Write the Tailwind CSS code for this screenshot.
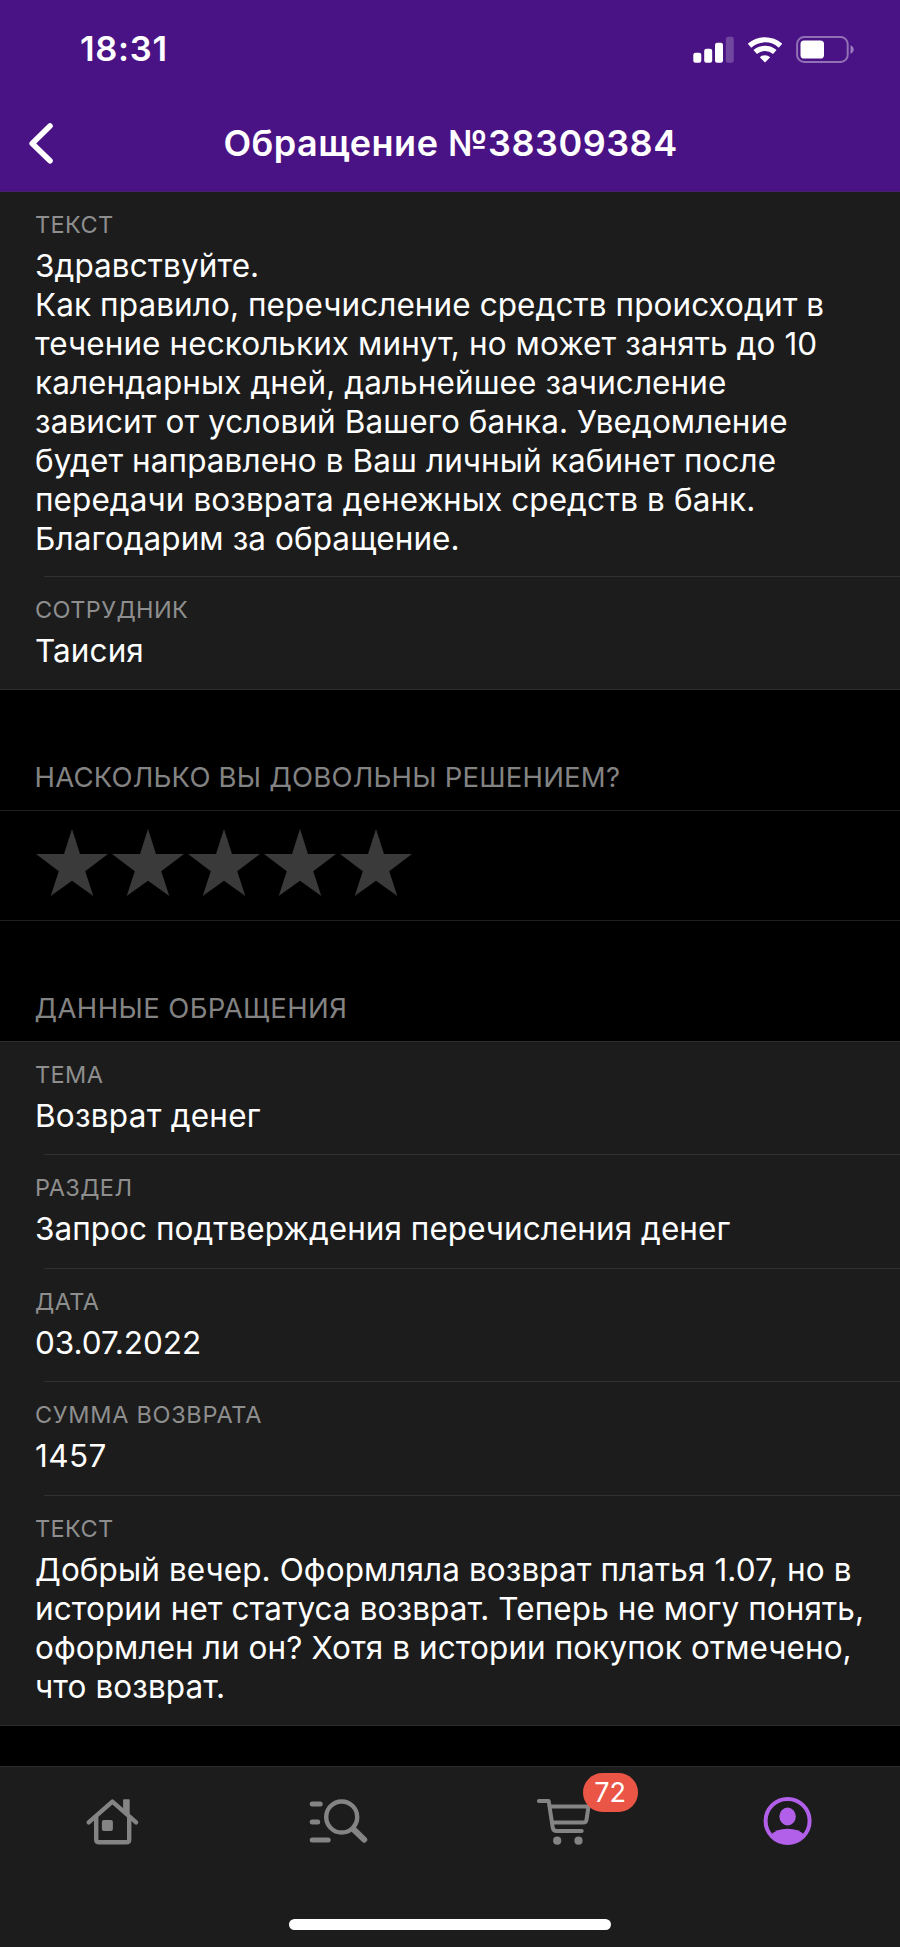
<!DOCTYPE html>
<html lang="ru">
<head>
  <meta charset="UTF-8" />
  <meta name="viewport" content="width=device-width, initial-scale=1.0"/>
  <title>Обращение №38309384</title>
  <script src="https://cdn.jsdelivr.net/npm/@tailwindcss/browser@4"></script>
</head>
<body class="bg-black text-white font-['Inter','Liberation_Sans',sans-serif]">

  <div class="w-[900px] h-[1947px] flex flex-col overflow-hidden">

    <!-- Header -->
    <header class="h-48 shrink-0 bg-[#491285] border-b border-[#43226b]">
      <div class="h-[98px] flex items-center justify-between pl-20 pr-[46px]">
        <span class="text-[34.5px] leading-10 font-semibold tracking-[0.7px]">18:31</span>
        <div class="flex items-center">
          <svg class="w-[41px] h-[27px]" viewBox="0 0 41 27" fill="#fff">
            <rect x="0.3" y="16.7" width="8" height="10" rx="2.2" />
            <rect x="11.2" y="12.7" width="8" height="14" rx="2.2" />
            <rect x="22" y="6.7" width="8" height="20" rx="2.2" />
            <rect x="32.8" y="0.7" width="8" height="26" rx="2.2" opacity="0.22" />
          </svg>
          <svg class="w-[34px] h-[27px] ml-[14px]" viewBox="0 0 34 27" fill="none" stroke="#fff" stroke-width="5.2">
            <path d="M1.5 9.7a23.2 23.2 0 0 1 31 0" />
            <path d="M7.2 16a14.8 14.8 0 0 1 19.6 0" />
            <path d="M11.8 21.3a7.8 7.8 0 0 1 10.4 0L17 26.5z" fill="#fff" stroke="none" />
          </svg>
          <svg class="w-[58px] h-[27px] ml-[14px]" viewBox="0 0 58 27">
            <rect x="1.1" y="1.1" width="50.6" height="24.8" rx="7" fill="none" stroke="#fff" stroke-opacity="0.4" stroke-width="2" />
            <rect x="4.5" y="4.5" width="23.5" height="18" rx="3.6" fill="#fff" />
            <path d="M54.5 9.2q3.2 1.4 3.2 4.4t-3.2 4.4z" fill="#fff" fill-opacity="0.45" />
          </svg>
        </div>
      </div>
      <div class="h-[89px] grid grid-cols-[80px_1fr_80px] items-center">
        <svg class="w-[26px] h-[42px] ml-7" viewBox="0 0 26 42" fill="none" stroke="#fff" stroke-width="5.6" stroke-linecap="round" stroke-linejoin="round">
          <path d="M22 4L4.200 21.500l17.800 17.200" />
        </svg>
        <h1 class="text-center text-[36px] leading-[42px] font-semibold tracking-[0.5px] pl-px">Обращение №38309384</h1>
      </div>
    </header>

    <!-- Answer -->
    <section class="shrink-0 bg-[#1c1c1c] border-b border-[#2e2e2e] text-[31.5px] leading-[38.95px] tracking-[0.08px] whitespace-nowrap">
      <div class="h-[385px] pl-[35px] pt-[19px] relative">
        <p class="text-[23.5px] leading-7 tracking-[0.4px] text-[#8e8e8e] mb-2">ТЕКСТ</p>
        <p>Здравствуйте.<br>
          Как правило, перечисление средств происходит в<br>
          течение нескольких минут, но может занять до 10<br>
          календарных дней, дальнейшее зачисление<br>
          зависит от условий Вашего банка. Уведомление<br>
          будет направлено в Ваш личный кабинет после<br>
          передачи возврата денежных средств в банк.<br>
          Благодарим за обращение.</p>
        <div class="absolute left-11 right-0 bottom-0 h-px bg-[#303030]"></div>
      </div>
      <div class="h-28 pl-[35px] pt-[19px]">
        <p class="text-[23.5px] leading-7 tracking-[0.4px] text-[#8e8e8e] mb-2">СОТРУДНИК</p>
        <p>Таисия</p>
      </div>
    </section>

    <!-- Rating -->
    <h2 class="h-[120px] shrink-0 flex items-end pl-[34.5px] pb-4 text-[27.5px] leading-[33px] tracking-[0.22px] text-[#838383]">НАСКОЛЬКО ВЫ ДОВОЛЬНЫ РЕШЕНИЕМ?</h2>
    <section class="h-[111px] shrink-0 flex pl-[34px] pt-[18px] border-y border-[#1e1e1e] text-[#3a3a3a]">
      <svg class="w-[76px] h-[68px]" viewBox="0 0 76 68" fill="currentColor"><path d="M38 0l8 25h28L51.2 42.3 59.3 67 38 51.7 16.7 67l8.1-24.7L2 25h28z" /></svg>
      <svg class="w-[76px] h-[68px]" viewBox="0 0 76 68" fill="currentColor"><path d="M38 0l8 25h28L51.2 42.3 59.3 67 38 51.7 16.7 67l8.1-24.7L2 25h28z" /></svg>
      <svg class="w-[76px] h-[68px]" viewBox="0 0 76 68" fill="currentColor"><path d="M38 0l8 25h28L51.2 42.3 59.3 67 38 51.7 16.7 67l8.1-24.7L2 25h28z" /></svg>
      <svg class="w-[76px] h-[68px]" viewBox="0 0 76 68" fill="currentColor"><path d="M38 0l8 25h28L51.2 42.3 59.3 67 38 51.7 16.7 67l8.1-24.7L2 25h28z" /></svg>
      <svg class="w-[76px] h-[68px]" viewBox="0 0 76 68" fill="currentColor"><path d="M38 0l8 25h28L51.2 42.3 59.3 67 38 51.7 16.7 67l8.1-24.7L2 25h28z" /></svg>
    </section>

    <!-- Request details -->
    <h2 class="h-[120px] shrink-0 flex items-end pl-[34.5px] pb-4 text-[27.5px] leading-[33px] tracking-[0.4px] text-[#838383]">ДАННЫЕ ОБРАЩЕНИЯ</h2>
    <section class="shrink-0 bg-[#1c1c1c] border-y border-[#2e2e2e] text-[31.5px] leading-[38.95px] tracking-[0.08px] whitespace-nowrap">
      <div class="h-[113px] pl-[35px] pt-[19px] relative">
        <p class="text-[23.5px] leading-7 tracking-[0.4px] text-[#8e8e8e] mb-2">ТЕМА</p>
        <p class="tracking-[0.25px]">Возврат денег</p>
        <div class="absolute left-11 right-0 bottom-0 h-px bg-[#303030]"></div>
      </div>
      <div class="h-[114px] pl-[35px] pt-[19px] relative">
        <p class="text-[23.5px] leading-7 tracking-[0.4px] text-[#8e8e8e] mb-2">РАЗДЕЛ</p>
        <p class="tracking-[0.04px]">Запрос подтверждения перечисления денег</p>
        <div class="absolute left-11 right-0 bottom-0 h-px bg-[#303030]"></div>
      </div>
      <div class="h-[113px] pl-[35px] pt-[19px] relative">
        <p class="text-[23.5px] leading-7 tracking-[0.4px] text-[#8e8e8e] mb-2">ДАТА</p>
        <p class="tracking-[-0.05px]">03.07.2022</p>
        <div class="absolute left-11 right-0 bottom-0 h-px bg-[#303030]"></div>
      </div>
      <div class="h-[114px] pl-[35px] pt-[19px] relative">
        <p class="text-[23.5px] leading-7 tracking-[0.7px] text-[#8e8e8e] mb-2">СУММА ВОЗВРАТА</p>
        <p class="tracking-[0.4px]">1457</p>
        <div class="absolute left-11 right-0 bottom-0 h-px bg-[#303030]"></div>
      </div>
      <div class="h-[229px] pl-[35px] pt-[19px]">
        <p class="text-[23.5px] leading-7 tracking-[0.4px] text-[#8e8e8e] mb-2">ТЕКСТ</p>
        <p>Добрый вечер. Оформляла возврат платья 1.07, но в<br>
          истории нет статуса возврат. Теперь не могу понять,<br>
          оформлен ли он? Хотя в истории покупок отмечено,<br>
          что возврат.</p>
      </div>
    </section>

    <!-- Tab bar -->
    <nav class="mt-auto h-[181px] shrink-0 bg-[#1c1c1c] border-t border-[#2a2a2a] flex flex-col justify-between pt-7 pb-[17px] text-[#848484]">
      <div class="grid grid-cols-4 justify-items-center">
        <svg class="w-16 h-14" viewBox="0.6 0 64 56" fill="none" stroke="currentColor" stroke-width="4.4" stroke-linecap="round" stroke-linejoin="round">
          <path d="M8.3 27.3L32 6.6l23.7 20.7" />
          <path d="M15.8 22v22.5q0 2.8 2.8 2.8h27.4q2.8 0 2.8-2.8V22" />
          <path d="M43.7 4.3h4.6q1 0 1 1V21l-6.6-5.8V5.3q0-1 1-1z" fill="currentColor" stroke="none" />
          <rect x="21.5" y="25" width="11" height="11" rx="2" fill="currentColor" stroke="none" />
        </svg>
        <svg class="w-16 h-14" viewBox="0.8 0 64 56" fill="none" stroke="currentColor" stroke-width="5" stroke-linecap="round">
          <path d="M7 9h8M7 27h5.5M7 45h16" />
          <circle cx="36.5" cy="22" r="15.5" stroke-width="4.4" />
          <path d="M49 35l10 9.7" stroke-width="6" />
        </svg>
        <div class="relative">
          <svg class="w-16 h-14" viewBox="0.8 0 64 56" fill="none" stroke="currentColor" stroke-width="4" stroke-linecap="round" stroke-linejoin="round">
            <path d="M8.7 6h9.8l4 26.5q.5 3.5 4 3.5h25" />
            <path d="M20 11.6h38.3l-2 13.2q-.4 2.8-3.2 2.8H22" />
            <circle cx="27" cy="45.7" r="4.1" fill="currentColor" stroke="none" />
            <circle cx="48.3" cy="45.7" r="4.1" fill="currentColor" stroke="none" />
          </svg>
          <span class="absolute left-[52px] -top-[22px] w-[55px] h-[39px] rounded-full bg-[#ea5545] text-white text-[27px] leading-[39px] text-center">72</span>
        </div>
        <svg class="w-16 h-14 text-[#b260ea]" viewBox="0.6 0 64 56" fill="currentColor">
          <circle cx="32.2" cy="26" r="22" fill="none" stroke="currentColor" stroke-width="4" />
          <ellipse cx="32.2" cy="21.5" rx="8.2" ry="9" />
          <path d="M15.5 40q5.500-6.300 16.700-6.300T48.900 40A22 22 0 0 1 15.500 40z" />
        </svg>
      </div>
      <div class="w-[322px] h-[11px] rounded-full bg-white mx-auto"></div>
    </nav>

  </div>
</body>
</html>
